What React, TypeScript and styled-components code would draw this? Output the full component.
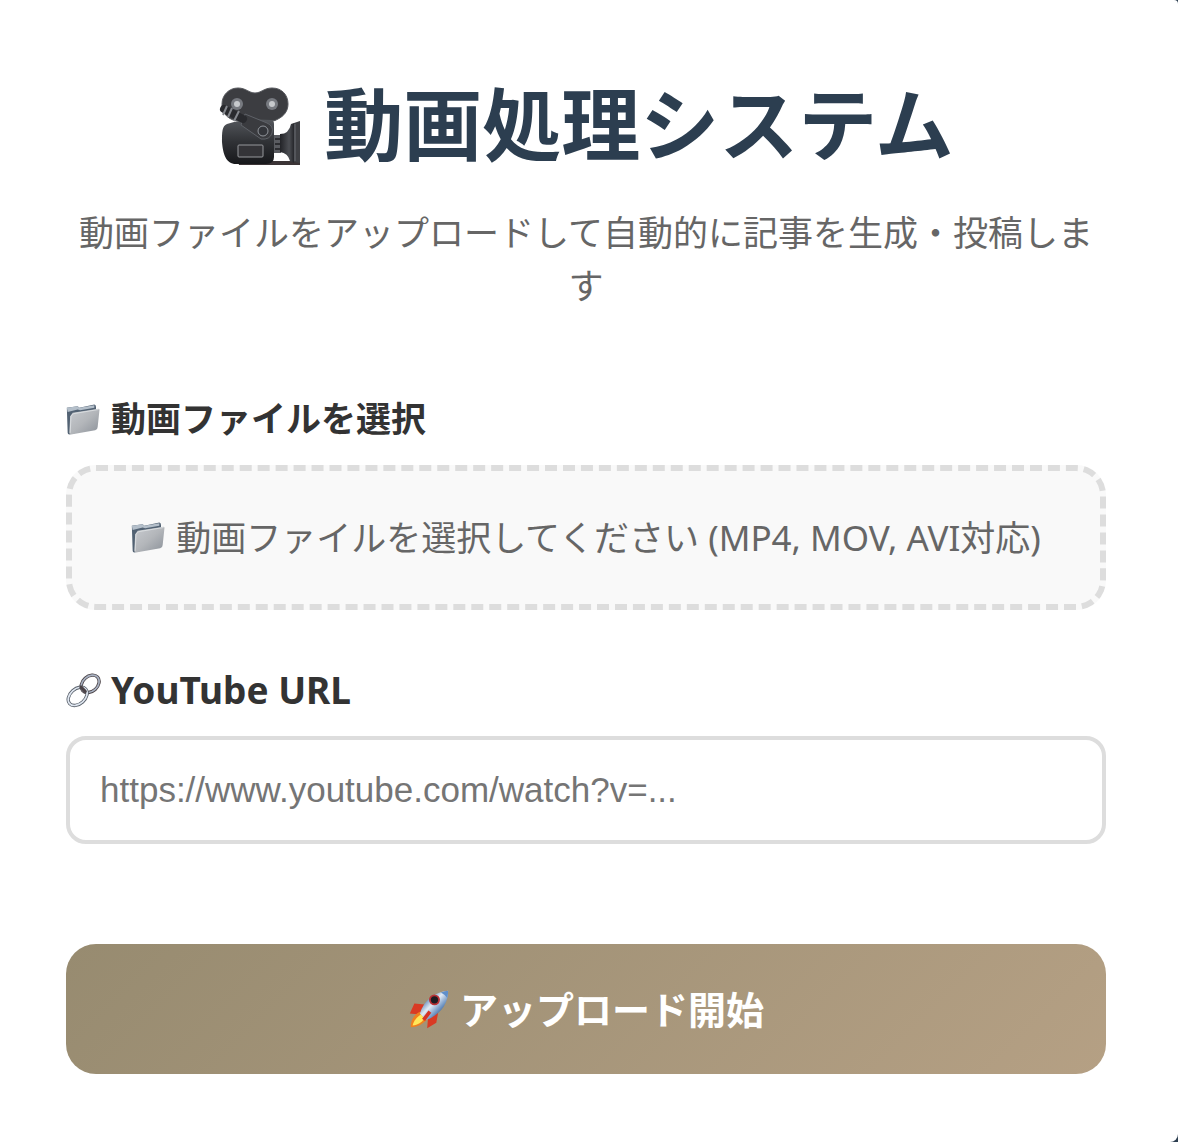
import React, { useId, useState } from "react";
import styled, { createGlobalStyle, css } from "styled-components";

const GlobalStyle = createGlobalStyle`
  *, *::before, *::after { box-sizing: border-box; }
  body {
    margin: 0;
    background: #2c3e50;
    color: #333;
    font-family: "Noto Sans", "Noto Sans CJK JP", sans-serif;
  }
`;

const Card = styled.main`
  padding: 66px 72px 68px 66px;
  background: #fff;
  border-radius: 0 4px 8px 0;
`;

const Header = styled.header`
  margin-bottom: 81px;
  text-align: center;
`;

const Title = styled.h1`
  display: flex;
  align-items: center;
  justify-content: center;
  gap: 22px;
  margin: 0 0 22px;
  color: #2c3e50;
  font-size: 79px;
  line-height: 118px;
`;

const Subtitle = styled.p`
  margin: 0;
  color: #666;
  font-size: 35px;
  line-height: 53px;
`;

const Form = styled.form`
  display: flex;
  flex-direction: column;
`;

const Field = styled.div`
  display: flex;
  flex-direction: column;
  gap: 20px;
  margin-bottom: 54px;
`;

const iconText = css`
  display: flex;
  align-items: center;
  gap: 10px;
  font-size: 35px;
`;

const FieldLabel = styled.label<{ $latin?: boolean }>`
  ${iconText}
  ${(p) => p.$latin && "font-size: 37px;"}
  font-weight: 700;
  line-height: 52px;
`;

const DropZone = styled.label`
  ${iconText}
  justify-content: center;
  padding: 40px;
  border: 6px dashed #ddd;
  border-radius: 30px;
  background: #f9f9f9;
  color: #666;
  line-height: 53px;
  cursor: pointer;
`;

const FileInput = styled.input`
  position: absolute;
  width: 1px;
  height: 1px;
  opacity: 0;
`;

const UrlInput = styled.input`
  width: 100%;
  padding: 30px;
  border: 4px solid #ddd;
  border-radius: 20px;
  background: #fff;
  color: #333;
  font-family: "Liberation Sans", sans-serif;
  font-size: 35px;
  line-height: 40px;
  &::placeholder { color: #757575; }
`;

const SubmitButton = styled.button`
  display: flex;
  align-items: center;
  justify-content: center;
  gap: 10px;
  width: 100%;
  margin-top: 46px;
  padding: 36px;
  border: 0;
  border-radius: 30px;
  background: linear-gradient(135deg, #978b70, #b5a084);
  color: #fff;
  font-family: inherit;
  font-size: 38px;
  font-weight: 700;
  line-height: 58px;
  cursor: pointer;
`;

const Icon = styled.svg<{ $size: number }>`
  flex: none;
  width: ${(p) => p.$size}px;
  height: ${(p) => p.$size}px;
`;

function CameraIcon() {
  return (
    <Icon $size={84} viewBox="0 -2 84 84" aria-hidden="true">
      <defs>
        <linearGradient id="cam-body" x1="0" y1="0" x2="0" y2="1">
          <stop offset="0" stopColor="#54575c" />
          <stop offset="0.5" stopColor="#303236" />
          <stop offset="1" stopColor="#17181b" />
        </linearGradient>
        <linearGradient id="cam-lens" x1="0" y1="0" x2="1" y2="0">
          <stop offset="0" stopColor="#222327" />
          <stop offset="0.65" stopColor="#4c4e53" />
          <stop offset="1" stopColor="#25262a" />
        </linearGradient>
      </defs>
      <path d="M20 3c8 0 11 5 17 5s9-5 17-5c10 0 16 7 16 16 0 7-4 12-10 15q-3 2-6 2H22C11 36 4 29 4 19 4 10 11 3 20 3z" fill="#3c3d41" stroke="#55575c" />
      <circle cx="19" cy="19" r="6" fill="#777a80" />
      <circle cx="19" cy="19" r="3" fill="#c7cacd" />
      <circle cx="54" cy="19" r="6" fill="#777a80" />
      <circle cx="54" cy="19" r="3" fill="#c7cacd" />
      <path d="M20 76h62v4H21z" fill="#3b3436" />
      <path d="M9 39c14-5 31-5 44-4q3 0 3 4v33q0 7-8 7H18C8 79 5 69 4 57c0-10 0-16 5-18z" fill="url(#cam-body)" />
      <path d="M56 50h7v18h-7z" fill="#5a5c61" />
      <path d="M57 54h6m-6 5h6m-6 5h6" stroke="#2c2d31" strokeWidth="2" />
      <path d="M62 49q9 0 11-10l3-1v40l-4-2q-2-8-10-9z" fill="url(#cam-lens)" />
      <path d="m76 38 6-2v42l-6-1z" fill="#3f4044" />
      <path d="M77 39v37" stroke="#6b6d72" />
      <path d="m27 29 22 9q7 3 5 10t-11 6L23 40z" fill="#3a3b3f" stroke="#5f6268" />
      <circle cx="45" cy="46" r="5" fill="#33353a" stroke="#92969c" />
      <path d="m6 24 19 10" stroke="#292a2e" strokeWidth="8" strokeLinecap="round" />
      <path d="m9 21-4 9m9-7-4 9m11-6-5 10" stroke="#85888e" strokeWidth="2" />
      <rect x="20" y="60" width="25" height="12" rx="1" fill="#343438" stroke="#96989c" />
    </Icon>
  );
}

function FolderIcon() {
  const id = useId();
  return (
    <Icon $size={35} viewBox="0 0 42 42" aria-hidden="true">
      <defs>
        <linearGradient id={id} x1="0" y1="0" x2="1" y2="1">
          <stop offset="0" stopColor="#c8cbd0" />
          <stop offset="0.5" stopColor="#b3b6ba" />
          <stop offset="1" stopColor="#8a9098" />
        </linearGradient>
      </defs>
      <path d="m1 7 13-2 2 2 18-4q2 0 2 3v25L4 39q-2 0-2-2z" fill="#526273" />
      <path d="m1 7 13-2 2 2 18-3v3L17 10l-3-1L2 12z" fill="#b4bfca" />
      <path d="m5 17 3-4 31-5q2 0 1 3l-2 19q0 3-3 4L6 39q-2 0-2-2z" fill={`url(#${id})`} />
      <path d="m5 37 1-20 3-3 30-5" fill="none" stroke="#dfe2e5" />
    </Icon>
  );
}

function LinkIcon() {
  return (
    <Icon $size={35} viewBox="0 0 42 42" aria-hidden="true">
      <g fill="none">
        <ellipse cx="29" cy="13" rx="12" ry="9" transform="rotate(-42 29 13)" stroke="#4b4347" strokeWidth="4" />
        <ellipse cx="29" cy="13" rx="12" ry="9" transform="rotate(-42 29 13)" stroke="#a9b2c2" strokeWidth="2" />
        <ellipse cx="14" cy="28" rx="13" ry="9" transform="rotate(-42 14 28)" stroke="#59606a" strokeWidth="4" />
        <ellipse cx="14" cy="28" rx="13" ry="9" transform="rotate(-42 14 28)" stroke="#dfe6f0" strokeWidth="2" />
        <path d="m18 17 5 5" stroke="#4b4347" strokeWidth="4" strokeLinecap="round" />
      </g>
    </Icon>
  );
}

function RocketIcon() {
  return (
    <Icon $size={42} viewBox="0 0 46 46" aria-hidden="true">
      <defs>
        <linearGradient id="rocket-body" x1="0" y1="0" x2="1" y2="1">
          <stop offset="0.25" stopColor="#5f87b8" />
          <stop offset="0.45" stopColor="#e3ebf4" />
          <stop offset="0.65" stopColor="#7196c4" />
          <stop offset="0.8" stopColor="#34527f" />
        </linearGradient>
      </defs>
      <path d="M18 18 7 17 2 28l11 1zM33 27l-2 11-10 6 1-12z" fill="#d93a24" />
      <path d="M13 26C5 30 3 37 3 43c7 0 13-3 18-9z" fill="#f0801f" />
      <path d="M14 29c-5 3-8 8-9 12 6-1 10-3 13-8z" fill="#ffe75a" />
      <path d="M13 28C17 14 29 4 44 3c0 14-8 26-24 32z" fill="url(#rocket-body)" />
      <path d="M36 5q4-2 8-2 0 4-1 8-3-4-7-6z" fill="#5f8fca" />
      <circle cx="29" cy="13" r="6" fill="#b93135" />
      <circle cx="29" cy="13" r="4" fill="#1e1c22" />
      <path d="m24 26-7 9" stroke="#d63325" strokeWidth="4" />
    </Icon>
  );
}

export default function App() {
  const [fileName, setFileName] = useState("");
  const [url, setUrl] = useState("");

  return (
    <>
      <GlobalStyle />
      <Card lang="ja">
        <Header>
          <Title>
            <CameraIcon />
            動画処理システム
          </Title>
          <Subtitle>動画ファイルをアップロードして自動的に記事を生成・投稿します</Subtitle>
        </Header>
        <Form onSubmit={(e) => e.preventDefault()}>
          <Field>
            <FieldLabel htmlFor="video-file">
              <FolderIcon />
              動画ファイルを選択
            </FieldLabel>
            <DropZone htmlFor="video-file">
              <FolderIcon />
              {fileName || "動画ファイルを選択してください (MP4, MOV, AVI対応)"}
            </DropZone>
            <FileInput
              id="video-file"
              type="file"
              accept=".mp4,.mov,.avi"
              onChange={(e) => setFileName(e.target.files?.[0]?.name ?? "")}
            />
          </Field>
          <Field>
            <FieldLabel $latin htmlFor="youtube-url">
              <LinkIcon />
              YouTube URL
            </FieldLabel>
            <UrlInput
              id="youtube-url"
              type="url"
              placeholder="https://www.youtube.com/watch?v=..."
              value={url}
              onChange={(e) => setUrl(e.target.value)}
            />
          </Field>
          <SubmitButton type="submit">
            <RocketIcon />
            アップロード開始
          </SubmitButton>
        </Form>
      </Card>
    </>
  );
}
